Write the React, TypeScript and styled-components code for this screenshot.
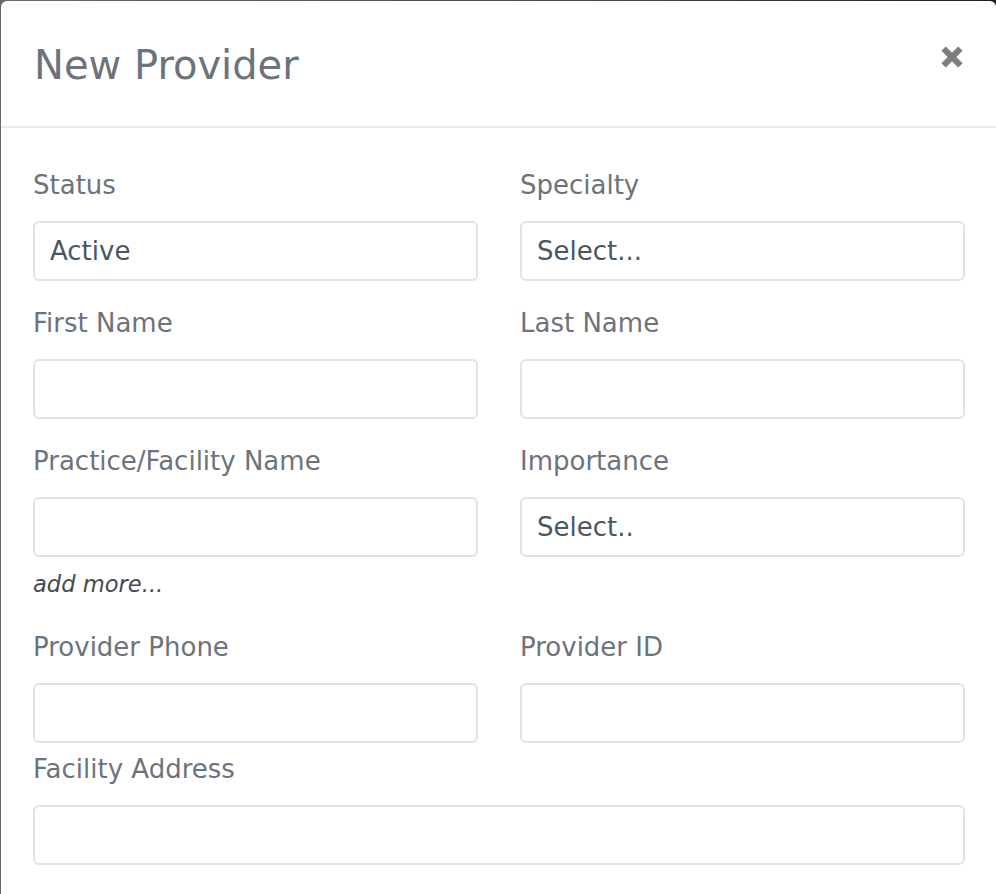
import React from "react";
import styled, { createGlobalStyle } from "styled-components";

const Global = createGlobalStyle`
  html, body { margin: 0; padding: 0; }
  body {
    background: #5e5e5e;
    font-family: "DejaVu Sans", "Liberation Sans", sans-serif;
    overflow: hidden;
  }
  * { box-sizing: border-box; }
`;

const Page = styled.div`
  width: 996px;
  height: 894px;
  padding: 1px 0 0 1px;
  background: linear-gradient(90deg, #6a6a6a 0%, #4a4a4a 60%, #1e1e1e 100%);
  overflow: hidden;
`;

const Modal = styled.div`
  width: 995px;
  min-height: 920px;
  background: #fff;
  border-radius: 6px 6px 0 0;
  display: flex;
  flex-direction: column;
`;

const Header = styled.div`
  height: 127px;
  border-bottom: 2px solid #e9e9ef;
  display: flex;
  align-items: center;
  justify-content: space-between;
  padding: 2px 33px 0 33px;
`;

const Title = styled.h1`
  margin: 0;
  font-size: 40px;
  font-weight: 400;
  color: #6c737b;
`;

const Close = styled.button`
  align-self: flex-start;
  margin-top: 43px;
  padding: 0;
  border: 0;
  background: none;
  width: 22px;
  height: 22px;
  cursor: pointer;
  display: flex;
`;

const Body = styled.div`
  padding: 38px 31px 30px 32px;
  display: flex;
  flex-direction: column;
`;

const Row = styled.div<{ $top: number; $cols?: number }>`
  display: grid;
  grid-template-columns: ${(p) => (p.$cols === 1 ? "1fr" : "1fr 1fr")};
  column-gap: 42px;
  margin-top: ${(p) => p.$top}px;
  align-items: start;
`;

const Field = styled.div`
  display: flex;
  flex-direction: column;
`;

const Label = styled.label`
  font-size: 26px;
  line-height: 39px;
  color: #6c737b;
  margin-bottom: 16px;
`;

const Input = styled.div`
  height: 60px;
  border: 2px solid #e3e3e3;
  border-radius: 6px;
  display: flex;
  align-items: center;
  padding: 0 15px;
  font-size: 26px;
  color: #4a5762;
`;

const AddMore = styled.a`
  margin: 11px 0 4px 0;
  font-size: 22.6px;
  line-height: 33px;
  font-style: italic;
  color: #454a50;
  cursor: pointer;
`;

const CloseIcon = () => (
  <svg width="22" height="22" viewBox="0 0 22 22">
    <g stroke="#7d7d7d" strokeWidth="6.2" strokeLinecap="butt">
      <line x1="2.6" y1="2.6" x2="19.4" y2="19.4" />
      <line x1="19.4" y1="2.6" x2="2.6" y2="19.4" />
    </g>
  </svg>
);

type F = { label: string; value?: string };

const FormField = ({ label, value }: F) => (
  <Field>
    <Label>{label}</Label>
    <Input>{value}</Input>
  </Field>
);

export default function App() {
  return (
    <>
      <Global />
      <Page>
        <Modal>
          <Header>
            <Title>New Provider</Title>
            <Close aria-label="Close">
              <CloseIcon />
            </Close>
          </Header>
          <Body>
            <Row $top={0}>
              <FormField label="Status" value="Active" />
              <FormField label="Specialty" value="Select..." />
            </Row>
            <Row $top={23}>
              <FormField label="First Name" />
              <FormField label="Last Name" />
            </Row>
            <Row $top={23}>
              <Field>
                <Label>Practice/Facility Name</Label>
                <Input />
                <AddMore>add more...</AddMore>
              </Field>
              <FormField label="Importance" value="Select.." />
            </Row>
            <Row $top={23}>
              <FormField label="Provider Phone" />
              <FormField label="Provider ID" />
            </Row>
            <Row $top={7} $cols={1}>
              <FormField label="Facility Address" />
            </Row>
          </Body>
        </Modal>
      </Page>
    </>
  );
}
